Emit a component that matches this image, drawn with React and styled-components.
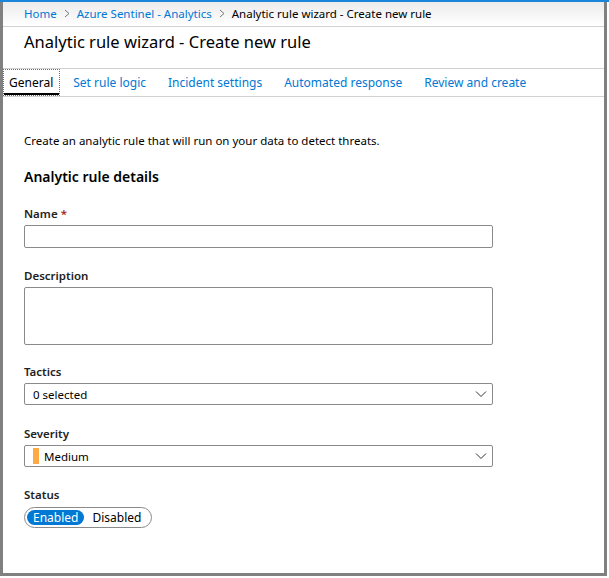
import React from "react";
import styled, { createGlobalStyle } from "styled-components";

const Global = createGlobalStyle`
  html, body { margin: 0; padding: 0; background: #fff; }
  body { font-family: "Noto Sans", "Open Sans", sans-serif; color: #000; }
  * { box-sizing: border-box; }
`;

const Screen = styled.div`
  width: 609px;
  height: 578px;
  background: #fff;
  display: flex;
  flex-direction: column;
  overflow: hidden;
`;

const TopLine = styled.div`
  height: 2px;
  background: #1a86d9;
  flex: none;
`;

const Frame = styled.div`
  width: 607px;
  height: 574px;
  border-left: 3px solid #808080;
  border-right: 3px solid #808080;
  border-bottom: 3px solid #808080;
  display: flex;
  flex-direction: column;
`;

const Breadcrumb = styled.nav`
  height: 25px;
  background: linear-gradient(#ececec, #ffffff);
  border-bottom: 1px solid #d2d2d2;
  display: flex;
  align-items: center;
  padding-left: 21px;
  font-size: 11.5px;
  gap: 7px;
  padding-bottom: 1px;
`;

const Crumb = styled.span`
  color: ${(p) => (p.$link ? "#0078d4" : "#000")};
`;

const Sep = styled.span`
  display: flex;
`;

const TitleBar = styled.header`
  height: 42px;
  border-bottom: 1px solid #d2d2d2;
  display: flex;
  align-items: center;
  padding-left: 21px;
  padding-bottom: 13px;
`;

const Title = styled.h1`
  margin: 0;
  font-size: 16.5px;
  font-weight: 400;
  color: #000;
`;

const Tabs = styled.div`
  height: 28px;
  border-bottom: 1px solid #d2d2d2;
  display: flex;
  align-items: stretch;
`;

const Tab = styled.div`
  display: flex;
  align-items: center;
  padding: 0 ${(p) => (p.$active ? "6px" : "10px")} 0 ${(p) => (p.$active ? "5px" : "10px")};
  margin-right: ${(p) => (p.$active ? "2px" : "0")};
  font-size: 12px;
  color: ${(p) => (p.$active ? "#000" : "#0078d4")};
  border: ${(p) => (p.$active ? "1px dotted #1a86d9" : "1px solid transparent")};
  box-shadow: ${(p) => (p.$active ? "inset 0 -2px 0 #000" : "none")};
`;

const Content = styled.main`
  padding: 36px 0 0 21px;
  display: flex;
  flex-direction: column;
`;

const Intro = styled.p`
  margin: 0;
  font-size: 11.5px;
  line-height: 16px;
`;

const SectionTitle = styled.h2`
  margin: 18px 0 0;
  font-size: 14px;
  font-weight: 600;
  line-height: 20px;
`;

const Field = styled.div`
  display: flex;
  flex-direction: column;
  margin-top: ${(p) => p.$mt || 0}px;
`;

const Label = styled.label`
  font-size: 11.5px;
  font-weight: 600;
  line-height: 16px;
  margin-bottom: ${(p) => p.$mb || 3}px;
  color: #222;
`;

const Req = styled.span`
  color: #a4262c;
  margin-left: 3px;
`;

const TextBox = styled.div`
  width: 469px;
  height: ${(p) => p.$h}px;
  border: 1px solid #8a8a8a;
  border-radius: 2px;
  background: #fff;
`;

const Select = styled.div`
  width: 469px;
  height: 22px;
  border: 1px solid #8a8a8a;
  border-radius: 2px;
  display: flex;
  align-items: center;
  padding: 0 5px 0 8px;
  font-size: 11.5px;
  gap: 5px;
`;

const SelectText = styled.span`
  flex: 1;
`;

const SevBar = styled.span`
  width: 6px;
  height: 16px;
  background: #ffaa44;
  flex: none;
`;

const Toggle = styled.div`
  display: inline-flex;
  align-self: flex-start;
  align-items: center;
  height: 21px;
  padding: 2px;
  border: 1px solid #8a8a8a;
  border-radius: 11px;
  font-size: 12px;
`;

const ToggleOpt = styled.span`
  height: 15px;
  display: flex;
  align-items: center;
  padding: 0 ${(p) => (p.$on ? "6px" : "8px")};
  border-radius: 8px;
  background: ${(p) => (p.$on ? "#0078d4" : "transparent")};
  color: ${(p) => (p.$on ? "#fff" : "#000")};
`;

const Chevron = () => (
  <svg width="12" height="8" viewBox="0 0 12 8">
    <path d="M1 1.5 L6 6.5 L11 1.5" fill="none" stroke="#333" strokeWidth="1" />
  </svg>
);

const Caret = () => (
  <svg width="6" height="9" viewBox="0 0 6 9">
    <path d="M1 1 L5 4.5 L1 8" fill="none" stroke="#777" strokeWidth="1" />
  </svg>
);

export default function App() {
  return (
    <Screen>
      <Global />
      <TopLine />
      <Frame>
        <Breadcrumb>
          <Crumb $link>Home</Crumb>
          <Sep><Caret /></Sep>
          <Crumb $link>Azure Sentinel - Analytics</Crumb>
          <Sep><Caret /></Sep>
          <Crumb>Analytic rule wizard - Create new rule</Crumb>
        </Breadcrumb>
        <TitleBar>
          <Title>Analytic rule wizard - Create new rule</Title>
        </TitleBar>
        <Tabs>
          <Tab $active>General</Tab>
          <Tab>Set rule logic</Tab>
          <Tab>Incident settings</Tab>
          <Tab>Automated response</Tab>
          <Tab>Review and create</Tab>
        </Tabs>
        <Content>
          <Intro>Create an analytic rule that will run on your data to detect threats.</Intro>
          <SectionTitle>Analytic rule details</SectionTitle>
          <Field $mt={19}>
            <Label>Name<Req>*</Req></Label>
            <TextBox $h={23} />
          </Field>
          <Field $mt={20}>
            <Label>Description</Label>
            <TextBox $h={58} />
          </Field>
          <Field $mt={19}>
            <Label>Tactics</Label>
            <Select>
              <SelectText>0 selected</SelectText>
              <Chevron />
            </Select>
          </Field>
          <Field $mt={21}>
            <Label>Severity</Label>
            <Select>
              <SevBar />
              <SelectText>Medium</SelectText>
              <Chevron />
            </Select>
          </Field>
          <Field $mt={20}>
            <Label $mb={4}>Status</Label>
            <Toggle>
              <ToggleOpt $on>Enabled</ToggleOpt>
              <ToggleOpt>Disabled</ToggleOpt>
            </Toggle>
          </Field>
        </Content>
      </Frame>
    </Screen>
  );
}
